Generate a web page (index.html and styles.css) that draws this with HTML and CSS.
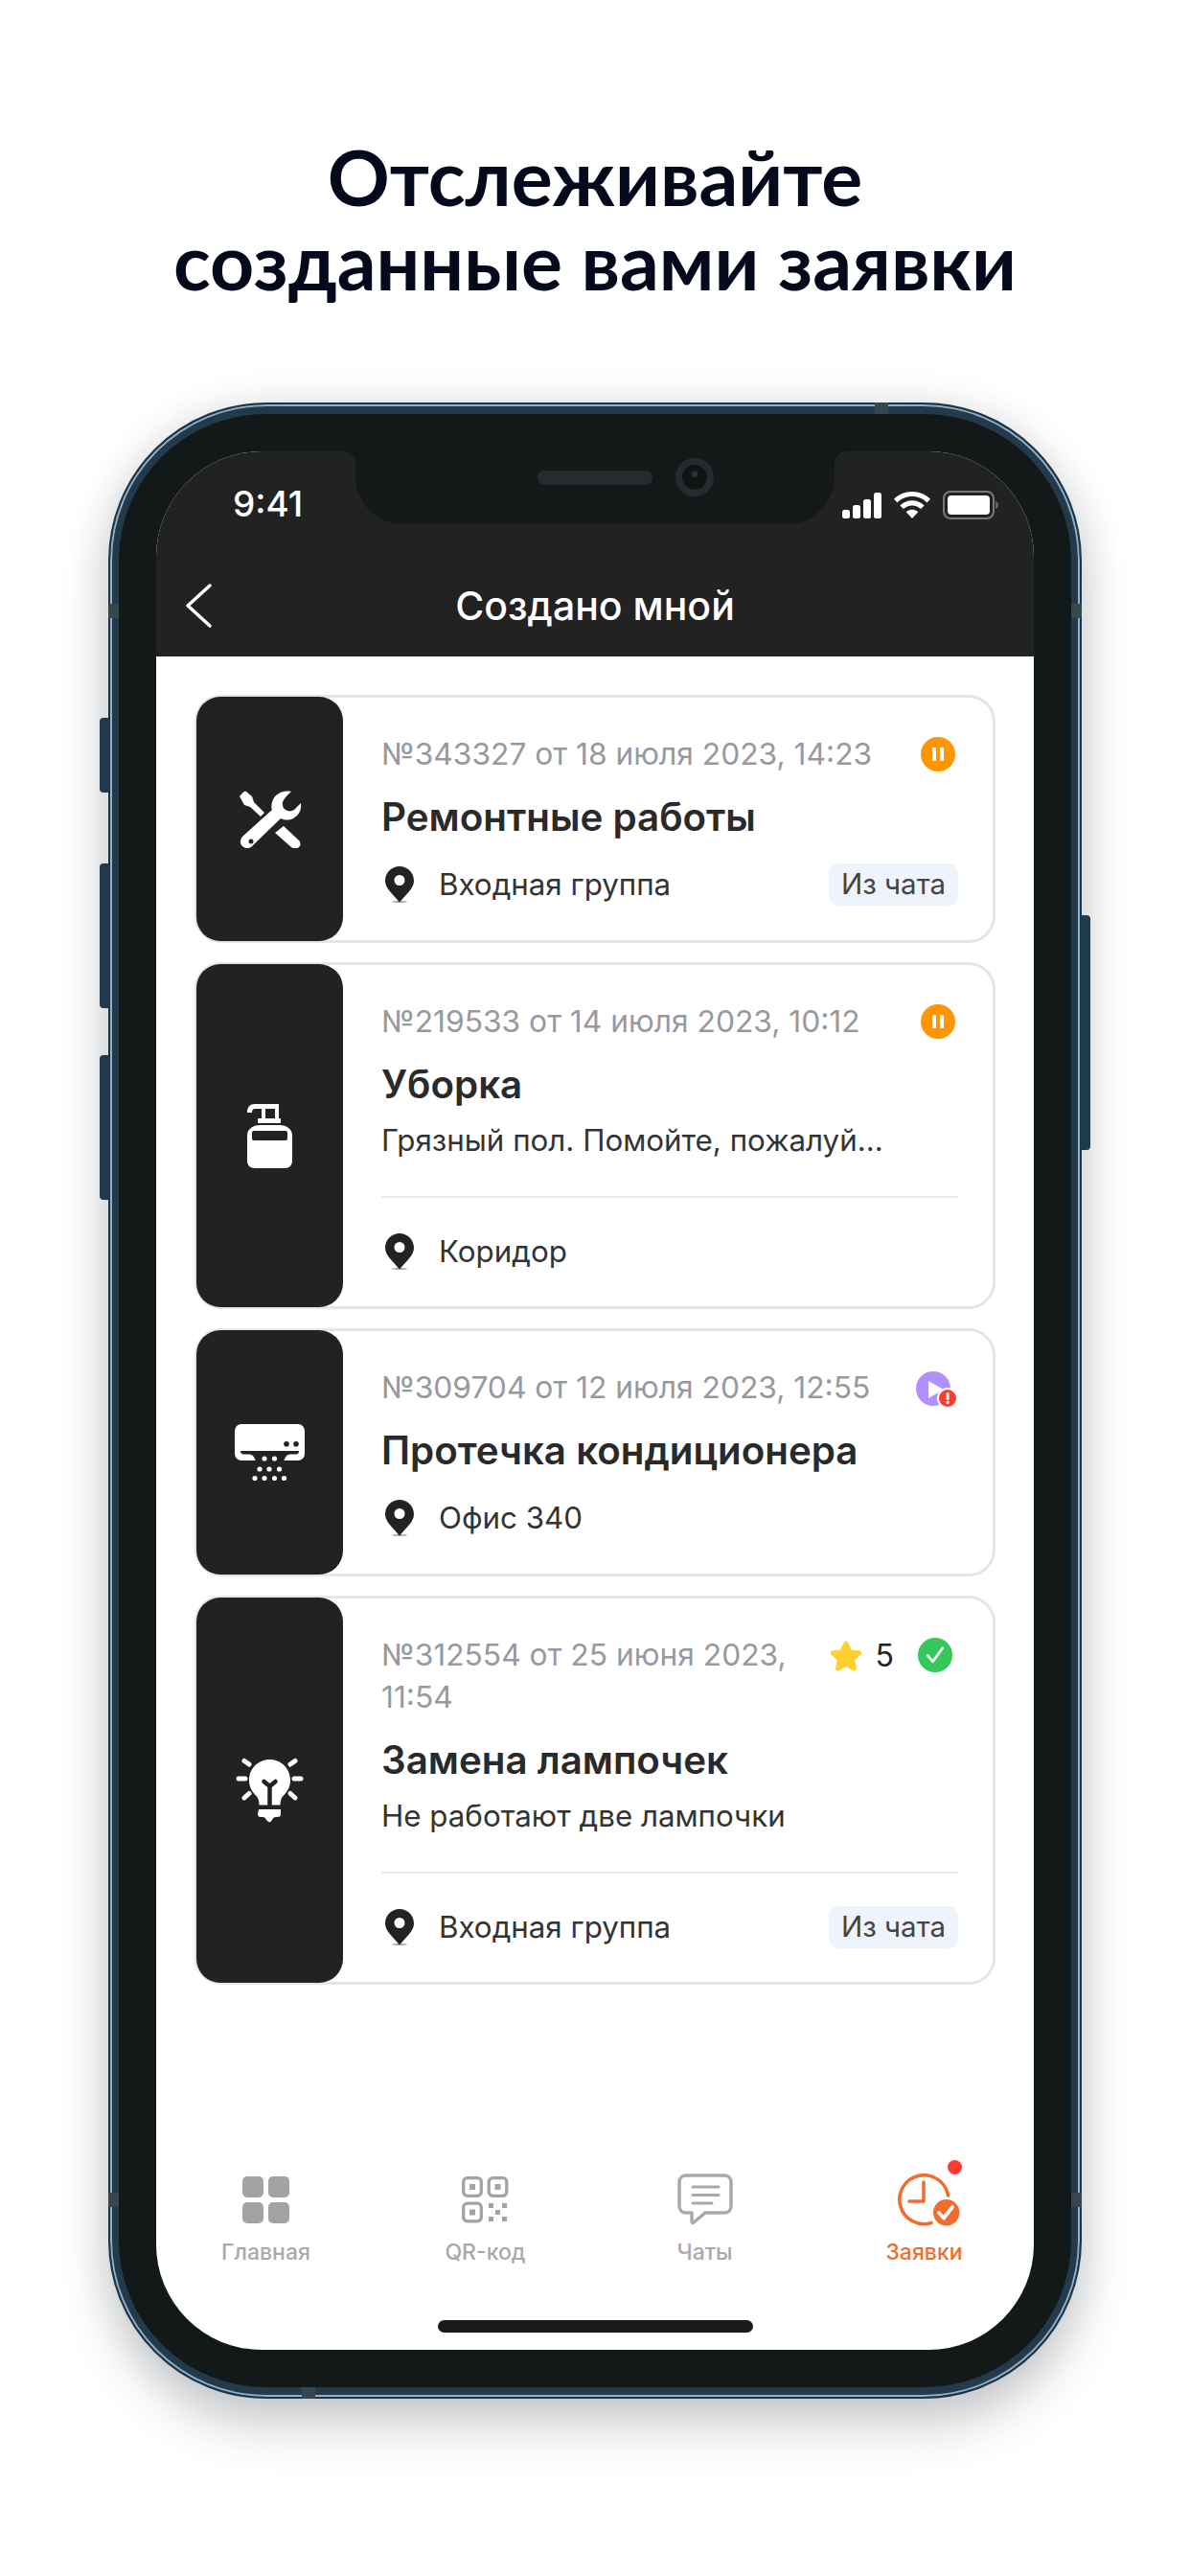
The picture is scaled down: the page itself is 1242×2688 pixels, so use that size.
FILE: index.html
```html
<!DOCTYPE html>
<html lang="ru">
<head>
    <meta charset="UTF-8">
    <meta name="viewport" content="width=device-width, initial-scale=1.0">
    <title>Создано мной</title>
    <link rel="stylesheet" href="styles.css">
</head>
<body>
    <h1 class="promo-title">Отслеживайте<br>созданные вами заявки</h1>

    <div class="phone">
        <!-- Боковые кнопки -->
        <span class="side-btn btn-mute"></span>
        <span class="side-btn btn-vol-up"></span>
        <span class="side-btn btn-vol-down"></span>
        <span class="side-btn btn-power"></span>
        <span class="band band-top"></span>
        <span class="band band-left-top"></span>
        <span class="band band-right-top"></span>
        <span class="band band-left-bottom"></span>
        <span class="band band-right-bottom"></span>
        <span class="band band-bottom"></span>

        <div class="phone-inner">
            <div class="screen">
                <!-- Вырез -->
                <div class="notch">
                    <span class="speaker"></span>
                    <span class="camera"></span>
                </div>

                <header class="app-header">
                    <div class="status-bar">
                        <span class="status-time">9:41</span>
                        <div class="status-icons">
                            <svg width="41" height="27" viewBox="0 0 41 27"><rect x="0" y="18" width="8" height="9" rx="2.5" fill="#fff"/><rect x="11" y="13" width="8" height="14" rx="2.5" fill="#fff"/><rect x="22" y="7" width="8" height="20" rx="2.5" fill="#fff"/><rect x="33" y="0" width="8" height="27" rx="2.5" fill="#fff"/></svg>
                            <svg width="40" height="28" viewBox="0 0 40 28"><path d="M20 0C12.500 0 5.800 3 1 7.800l3.500 3.600C8.400 7.500 13.900 5.100 20 5.100s11.600 2.400 15.500 6.300L39 7.800C34.200 3 27.500 0 20 0z" fill="#fff"/><path d="M20 9.300c-5 0-9.400 2-12.600 5.200l3.500 3.600c2.300-2.300 5.500-3.700 9.100-3.700s6.800 1.400 9.100 3.700l3.500-3.600C29.400 11.300 25 9.300 20 9.300z" fill="#fff"/><path d="M20 18.700c-2.500 0-4.700 1-6.300 2.600L20 28l6.300-6.700c-1.600-1.600-3.800-2.600-6.300-2.600z" fill="#fff"/></svg>
                            <svg width="58" height="30" viewBox="0 0 58 30"><rect x="1" y="1" width="52" height="28" rx="7" fill="none" stroke="#777" stroke-width="2"/><rect x="5" y="5" width="44" height="20" rx="4" fill="#fff"/><path d="M55 11c1.800.6 3 2.200 3 4s-1.200 3.400-3 4z" fill="#666"/></svg>
                        </div>
                    </div>
                    <div class="nav-bar">
                        <svg class="back-icon" width="30" height="48" viewBox="0 0 30 48"><path d="M27 3L4 24l23 21" fill="none" stroke="#fff" stroke-width="3.500" stroke-linecap="round" stroke-linejoin="round"/></svg>
                        <span class="nav-title">Создано мной</span>
                    </div>
                </header>

                <main class="ticket-list">
                    <!-- Заявка 1 -->
                    <article class="ticket ticket-short">
                        <div class="ticket-thumb">
                            <svg width="66" height="60" viewBox="0 0 66 60"><path d="M1 6l4-4.500C6 .5 7 .5 8 1l6 5 2 6 11 11-4 4L12 17l-6-2z" fill="#fff"/><path d="M38 44l9-7 16 15c2 2 2 5 0 7s-5 2-8 0z" fill="#fff"/><path d="M55 1C46-1 37 4 35 12c-1 3-1 6 0 8L5 47c-4 4-4 8-1 11s8 3 11-1l29-28c4 2 9 2 13 0 6-3 9-9 8-16l-7 7c-2 1-4 2-7 1-3-1-5-3-5-6-1-3 2-8 9-14z" fill="#fff"/><circle cx="13" cy="53" r="2.500" fill="#222"/></svg>
                        </div>
                        <div class="ticket-body">
                            <div class="ticket-top">
                                <span class="ticket-meta">№343327 от 18 июля 2023, 14:23</span>
                                <span class="status-dot status-paused"><i></i><i></i></span>
                            </div>
                            <h2 class="ticket-title">Ремонтные работы</h2>
                            <div class="ticket-place">
                                <svg class="pin" width="30" height="38" viewBox="0 0 30 38"><ellipse cx="15" cy="37" rx="8" ry="1" fill="#aaa"/><path d="M15 0C7 0 0 6.500 0 15c0 8 8 14 15 22.500C22 29 30 23 30 15 30 6.500 23 0 15 0z" fill="#222"/><circle cx="15" cy="14.500" r="5.500" fill="#fff"/></svg>
                                <span class="place-name">Входная группа</span>
                                <span class="chat-tag">Из чата</span>
                            </div>
                        </div>
                    </article>

                    <!-- Заявка 2 -->
                    <article class="ticket ticket-desc">
                        <div class="ticket-thumb">
                            <svg width="47" height="67" viewBox="0 0 47 67"><path d="M8 0h25v15h-4V5H19v10h-4V5H8c-2 0-3 1-3 4H0C0 3 3 0 8 0z" fill="#fff"/><rect x="11" y="15" width="24" height="5" rx="1" fill="#fff"/><path d="M13 22h21c7 0 13 4 13 11v26c0 5-3 8-8 8H8c-5 0-8-3-8-8V33c0-7 6-11 13-11z" fill="#fff"/><rect x="5" y="28" width="37" height="10" rx="2" fill="#222"/></svg>
                        </div>
                        <div class="ticket-body">
                            <div class="ticket-top">
                                <span class="ticket-meta">№219533 от 14 июля 2023, 10:12</span>
                                <span class="status-dot status-paused"><i></i><i></i></span>
                            </div>
                            <h2 class="ticket-title">Уборка</h2>
                            <p class="ticket-text">Грязный пол. Помойте, пожалуй...</p>
                            <hr class="ticket-line">
                            <div class="ticket-place">
                                <svg class="pin" width="30" height="38" viewBox="0 0 30 38"><ellipse cx="15" cy="37" rx="8" ry="1" fill="#aaa"/><path d="M15 0C7 0 0 6.500 0 15c0 8 8 14 15 22.500C22 29 30 23 30 15 30 6.500 23 0 15 0z" fill="#222"/><circle cx="15" cy="14.500" r="5.500" fill="#fff"/></svg>
                                <span class="place-name">Коридор</span>
                            </div>
                        </div>
                    </article>

                    <!-- Заявка 3 -->
                    <article class="ticket ticket-short">
                        <div class="ticket-thumb">
                            <svg width="73" height="59" viewBox="0 0 73 59"><rect x="0" y="0" width="73" height="38" rx="7" fill="#fff"/><path d="M6 28h61c0 2-1 3.500-3 3.500h-6c-2 0-4 1-5 3l-2 4H22l-2-4c-1-2-3-3-5-3H9c-2 0-3-1.500-3-3.500z" fill="#222"/><circle cx="54" cy="20.700" r="2.800" fill="#222"/><circle cx="64" cy="20.700" r="2.800" fill="#222"/><g fill="#fff"><circle cx="31" cy="36" r="2.600"/><circle cx="41.500" cy="36" r="2.600"/><circle cx="26" cy="47" r="2.600"/><circle cx="36" cy="47" r="2.600"/><circle cx="46.500" cy="47" r="2.600"/><circle cx="21" cy="56.500" r="2.600"/><circle cx="31" cy="56.500" r="2.600"/><circle cx="41.500" cy="56.500" r="2.600"/><circle cx="51.500" cy="56.500" r="2.600"/></g></svg>
                        </div>
                        <div class="ticket-body">
                            <div class="ticket-top">
                                <span class="ticket-meta">№309704 от 12 июля 2023, 12:55</span>
                                <span class="status-play">
                                    <svg width="44" height="44" viewBox="0 0 44 44"><circle cx="18" cy="18" r="18" fill="#b18ffc"/><path d="M13 10l16 9-16 9z" fill="#fff"/><circle cx="33" cy="28" r="11" fill="#fff"/><circle cx="33" cy="28" r="9" fill="#ff3b30"/><rect x="31.600" y="22" width="3" height="8" rx="1.500" fill="#fff"/><circle cx="33.100" cy="32.500" r="1.700" fill="#fff"/></svg>
                                </span>
                            </div>
                            <h2 class="ticket-title">Протечка кондиционера</h2>
                            <div class="ticket-place">
                                <svg class="pin" width="30" height="38" viewBox="0 0 30 38"><ellipse cx="15" cy="37" rx="8" ry="1" fill="#aaa"/><path d="M15 0C7 0 0 6.500 0 15c0 8 8 14 15 22.500C22 29 30 23 30 15 30 6.500 23 0 15 0z" fill="#222"/><circle cx="15" cy="14.500" r="5.500" fill="#fff"/></svg>
                                <span class="place-name">Офис 340</span>
                            </div>
                        </div>
                    </article>

                    <!-- Заявка 4 -->
                    <article class="ticket ticket-long">
                        <div class="ticket-thumb">
                            <svg width="71" height="68" viewBox="0 0 71 68"><g stroke="#fff" stroke-width="5" stroke-linecap="round"><path d="M9 3.500l5 3.500"/><path d="M62 3.500L57 7"/><path d="M3 22h7"/><path d="M61 22h7"/><path d="M9 42l5-4.500"/><path d="M62 42l-5-4.500"/></g><path d="M35.500 2C23.500 2 14 11.500 14 23.500c0 7 3 12 7 16 2.500 2.500 3.500 5.500 3.500 10h22c0-4.500 1-7.500 3.500-10 4-4 7-9 7-16C57 11.500 47.500 2 35.500 2z" fill="#fff"/><path d="M35.500 30v20M29.500 25l6 5 6-5" fill="none" stroke="#222" stroke-width="4.500" stroke-linecap="round" stroke-linejoin="round"/><path d="M24 54h23v5c0 2-1 3-3 3h-2c-2 0-3 1-4 3-1 1.500-2 2.500-2.500 2.500S33 66.500 32 65c-1-2-2-3-4-3h-2c-2 0-3-1-3-3z" fill="#fff"/></svg>
                        </div>
                        <div class="ticket-body">
                            <div class="ticket-top">
                                <span class="ticket-meta ticket-meta-wrap">№312554 от 25 июня 2023, 11:54</span>
                                <div class="ticket-rating">
                                    <svg width="34" height="33" viewBox="0 0 36 34"><path d="M18 1c1 0 2 .6 2.400 1.600l3.700 8 8.800 1.100c2.200.3 3 3 1.400 4.400l-6.500 6 1.700 8.700c.4 2.200-1.900 3.900-3.800 2.800L18 29.300 10.300 33.600c-1.900 1.100-4.200-.6-3.800-2.800l1.700-8.700-6.500-6C.1 14.700.9 12 3.100 11.700l8.800-1.100 3.700-8C16 1.600 17 1 18 1z" fill="#ffd02f"/></svg>
                                    <span class="rating-value">5</span>
                                    <svg width="36" height="36" viewBox="0 0 37 37"><circle cx="18.500" cy="18.500" r="18.500" fill="#34c759"/><path d="M10.500 19l5.500 6.500L26.500 11" fill="none" stroke="#fff" stroke-width="2.800" stroke-linecap="round" stroke-linejoin="round"/></svg>
                                </div>
                            </div>
                            <h2 class="ticket-title">Замена лампочек</h2>
                            <p class="ticket-text">Не работают две лампочки</p>
                            <hr class="ticket-line">
                            <div class="ticket-place">
                                <svg class="pin" width="30" height="38" viewBox="0 0 30 38"><ellipse cx="15" cy="37" rx="8" ry="1" fill="#aaa"/><path d="M15 0C7 0 0 6.500 0 15c0 8 8 14 15 22.500C22 29 30 23 30 15 30 6.500 23 0 15 0z" fill="#222"/><circle cx="15" cy="14.500" r="5.500" fill="#fff"/></svg>
                                <span class="place-name">Входная группа</span>
                                <span class="chat-tag">Из чата</span>
                            </div>
                        </div>
                    </article>
                </main>

                <!-- Нижнее меню -->
                <nav class="tab-bar">
                    <a class="tab">
                        <span class="tab-icon"><svg width="49" height="49" viewBox="0 0 49 49"><rect x="0" y="0" width="22" height="22" rx="5" fill="#a3a3a3"/><rect x="27" y="0" width="22" height="22" rx="5" fill="#a3a3a3"/><rect x="0" y="27" width="22" height="22" rx="5" fill="#a3a3a3"/><rect x="27" y="27" width="22" height="22" rx="5" fill="#a3a3a3"/></svg></span>
                        <span>Главная</span>
                    </a>
                    <a class="tab">
                        <span class="tab-icon"><svg width="49" height="49" viewBox="0 0 49 49"><g fill="none" stroke="#a3a3a3" stroke-width="3.300"><rect x="1.700" y="1.700" width="18.600" height="18.600" rx="4"/><rect x="28.200" y="1.700" width="18.600" height="18.600" rx="4"/><rect x="1.700" y="28.200" width="18.600" height="18.600" rx="4"/></g><g fill="#a3a3a3"><rect x="8" y="8" width="6" height="6"/><rect x="34.500" y="8" width="6" height="6"/><rect x="8" y="34.500" width="6" height="6"/><rect x="28" y="28" width="5" height="5"/><rect x="42" y="28" width="5" height="5"/><rect x="35" y="35" width="5" height="5"/><rect x="28" y="42" width="5" height="5"/><rect x="42" y="42" width="5" height="5"/></g></svg></span>
                        <span>QR-код</span>
                    </a>
                    <a class="tab">
                        <span class="tab-icon"><svg width="58" height="54" viewBox="0 0 58 54"><path d="M9 2h40c4 0 7 3 7 7v25c0 4-3 7-7 7H29L17 51c-1 1-2 0-2-1v-9H9c-4 0-7-3-7-7V9c0-4 3-7 7-7z" fill="none" stroke="#a9a9a9" stroke-width="3.500" stroke-linejoin="round"/><path d="M16 14h27M16 22.500h27M16 31h20" stroke="#a9a9a9" stroke-width="3" stroke-linecap="round"/></svg></span>
                        <span>Чаты</span>
                    </a>
                    <a class="tab tab-active">
                        <span class="tab-badge"></span>
                        <span class="tab-icon"><svg class="clock-icon" width="65" height="55" viewBox="0 0 65 55"><path d="M52.500 23A25.500 25.500 0 1 0 35 51.500" fill="none" stroke="#f26d2d" stroke-width="3.500" stroke-linecap="round"/><path d="M27 9v20H12" fill="none" stroke="#f26d2d" stroke-width="3.500" stroke-linecap="round" stroke-linejoin="round"/><circle cx="50.700" cy="40.700" r="13.700" fill="#f26d2d"/><path d="M43 41l5 5.500 9-11.500" fill="none" stroke="#fff" stroke-width="3.800" stroke-linecap="round" stroke-linejoin="round"/></svg></span>
                        <span>Заявки</span>
                    </a>
                </nav>
                <div class="home-row"><span class="home-bar"></span></div>
            </div>
        </div>
    </div>
</body>
</html>
```

FILE: styles.css
```css
/* Страница */
* {
    box-sizing: border-box;
}

body {
    margin: 0;
    width: 1242px;
    height: 2688px;
    overflow: hidden;
    background-color: #fff;
    font-family: 'Inter', 'Liberation Sans', sans-serif;
    display: flex;
    flex-direction: column;
    align-items: center;
}

.promo-title {
    margin: 140px 0 0;
    height: 280px;
    font-family: 'Lato', sans-serif;
    font-size: 80.5px;
    line-height: 88px;
    font-weight: 700;
    color: #040a1c;
    text-align: center;
}

/* Корпус телефона */
.phone {
    position: relative;
    width: 1016px;
    height: 2083px;
    flex-shrink: 0;
    padding: 10px 9px;
    border-radius: 165px;
    background-color: #233a4b;
    border: 2px solid #1d3547;
    box-shadow: inset 0 0 0 2px #8fb0c8, 0 30px 50px rgba(40, 50, 60, 0.22), 0 0 40px rgba(40, 50, 60, 0.12);
}

.phone-inner {
    height: 100%;
    padding: 39px;
    border-radius: 153px;
    background-color: #131819;
}

.side-btn {
    position: absolute;
    width: 10px;
    background-color: #1f3a4f;
    border-radius: 4px 0 0 4px;
    left: -11px;
}

.btn-mute { top: 327px; height: 78px; }
.btn-vol-up { top: 479px; height: 151px; }
.btn-vol-down { top: 679px; height: 151px; }

.btn-power {
    left: auto;
    right: -11px;
    top: 533px;
    height: 245px;
    border-radius: 0 4px 4px 0;
}

.band {
    position: absolute;
    background-color: #37474f;
}

.band-top { top: -2px; right: 200px; width: 14px; height: 12px; }
.band-bottom { bottom: -2px; left: 200px; width: 14px; height: 12px; }
.band-left-top { left: -2px; top: 208px; width: 11px; height: 15px; }
.band-right-top { right: -2px; top: 208px; width: 11px; height: 15px; }
.band-left-bottom { left: -2px; top: 1866px; width: 11px; height: 15px; }
.band-right-bottom { right: -2px; top: 1866px; width: 11px; height: 15px; }

/* Экран */
.screen {
    position: relative;
    height: 100%;
    display: flex;
    flex-direction: column;
    border-radius: 110px;
    overflow: hidden;
    background-color: #fff;
}

.notch {
    position: absolute;
    top: 0;
    left: 208px;
    width: 500px;
    height: 76px;
    background-color: #131819;
    border-radius: 0 0 50px 50px;
}

.notch::before,
.notch::after {
    content: "";
    position: absolute;
    top: 0;
    width: 14px;
    height: 14px;
}

.notch::before {
    left: -14px;
    background: radial-gradient(circle at 0 100%, transparent 14px, #131819 14.500px);
}

.notch::after {
    right: -14px;
    background: radial-gradient(circle at 100% 100%, transparent 14px, #131819 14.500px);
}

.speaker {
    position: absolute;
    left: 190px;
    top: 20px;
    width: 120px;
    height: 15px;
    border-radius: 8px;
    background-color: #262c2e;
}

.camera {
    position: absolute;
    left: 334px;
    top: 7px;
    width: 40px;
    height: 40px;
    border-radius: 50%;
    border: 7px solid #262c2e;
    background: radial-gradient(circle at 50% 38%, #2b3335 0 3px, #101415 3.500px);
}

.app-header {
    height: 214px;
    flex-shrink: 0;
    background-color: #222;
    display: flex;
    flex-direction: column;
}

.status-bar {
    height: 105px;
    padding: 35px 37px 0 80px;
    display: flex;
    justify-content: space-between;
    align-items: flex-start;
}

.status-time {
    color: #fff;
    font-size: 37px;
    line-height: 40px;
    font-weight: 500;
}

.status-icons {
    display: flex;
    align-items: center;
    gap: 12px;
    height: 42px;
}

.nav-bar {
    position: relative;
    flex: 1;
    display: flex;
    align-items: center;
    justify-content: center;
    padding-top: 3px;
}

.back-icon {
    position: absolute;
    left: 29px;
    top: 32px;
}

.nav-title {
    color: #fff;
    font-size: 41px;
    font-weight: 500;
}

/* Список заявок */
.ticket-list {
    flex: 1;
    padding: 40px 40px 0;
    display: flex;
    flex-direction: column;
    gap: 20px;
}

.ticket {
    display: flex;
    border: 3px solid #e4e5ea;
    border-radius: 28px;
    background-color: #fff;
}

.ticket-short { height: 259px; }
.ticket-desc { height: 362px; }
.ticket-long { height: 406px; }

.ticket-thumb {
    width: 153px;
    flex-shrink: 0;
    margin: -1px 0 -1px -1px;
    background-color: #222;
    border-radius: 25px;
    display: flex;
    align-items: center;
    justify-content: center;
}

.ticket-body {
    flex: 1;
    min-width: 0;
    padding: 37px 36px 0 40px;
    display: flex;
    flex-direction: column;
}

.ticket-top {
    display: flex;
    justify-content: space-between;
    align-items: flex-start;
}

.ticket-meta {
    color: #97999e;
    font-size: 31.75px;
    line-height: 44px;
}

.ticket-meta-wrap {
    width: 440px;
}

.status-dot {
    width: 36px;
    height: 36px;
    margin: 4px 3px 0 0;
    border-radius: 50%;
    display: flex;
    align-items: center;
    justify-content: center;
    gap: 4px;
}

.status-paused {
    background-color: #ff9500;
}

.status-paused i {
    width: 4px;
    height: 14px;
    border-radius: 1px;
    background-color: #fff;
}

.status-play {
    height: 39px;
    margin-top: 5px;
}

.ticket-rating {
    display: flex;
    align-items: center;
    gap: 14px;
    height: 44px;
    margin-right: 6px;
}

.rating-value {
    color: #222;
    font-size: 32px;
    margin-right: 11px;
}

.ticket-title {
    margin: 19px 0 0;
    color: #2a2a2a;
    font-size: 40.3px;
    line-height: 50px;
    font-weight: 600;
}

.ticket-text {
    margin: 13px 0 0;
    color: #333;
    font-size: 31.3px;
    line-height: 40px;
}

.ticket-line {
    width: 100%;
    margin: 38px 0 0;
    border: none;
    border-top: 2px solid #e9eaee;
}

.ticket-place {
    margin-top: 23px;
    height: 44px;
    display: flex;
    align-items: center;
}

.ticket-line + .ticket-place {
    margin-top: 34px;
}

.pin {
    flex-shrink: 0;
    margin: 0 26px 0 4px;
}

.place-name {
    flex: 1;
    color: #333;
    font-size: 31.3px;
}

.chat-tag {
    padding: 0 13px;
    height: 44px;
    line-height: 42px;
    border-radius: 10px;
    background-color: #eff3fb;
    color: #444;
    font-size: 29.5px;
}

/* Нижнее меню */
.tab-bar {
    height: 120px;
    flex-shrink: 0;
    display: grid;
    grid-template-columns: repeat(4, 1fr);
}

.tab {
    position: relative;
    padding-top: 6px;
    display: flex;
    flex-direction: column;
    align-items: center;
    gap: 13px;
    color: #a9a9a9;
    font-size: 23px;
    line-height: 28px;
    font-weight: 500;
}

.tab-icon {
    height: 56px;
    display: flex;
    align-items: center;
}

.tab-active {
    color: #f26d2d;
}

.clock-icon {
    margin-left: 9px;
}

.tab-badge {
    position: absolute;
    right: 75px;
    top: -7px;
    width: 15px;
    height: 15px;
    border-radius: 50%;
    background-color: #ff3b30;
}

.home-row {
    height: 71px;
    flex-shrink: 0;
    display: flex;
    justify-content: center;
    padding-top: 40px;
}

.home-bar {
    width: 329px;
    height: 13px;
    border-radius: 7px;
    background-color: #1a1a1a;
}
```
